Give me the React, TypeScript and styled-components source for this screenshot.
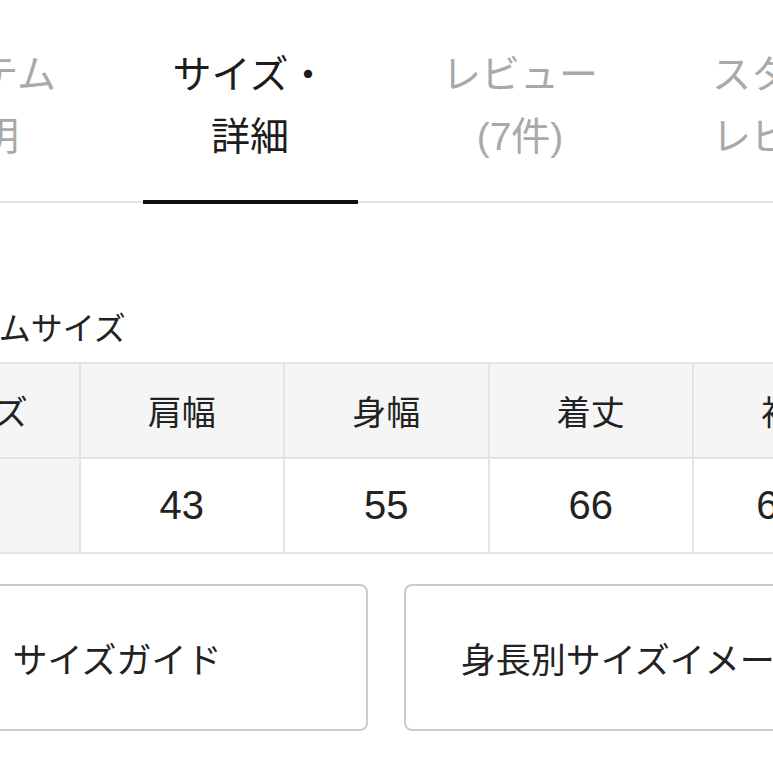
import React from "react";
import styled, { createGlobalStyle } from "styled-components";

const GlobalStyle = createGlobalStyle`
  html, body {
    margin: 0;
    padding: 0;
    background: #fff;
    overflow: hidden;
  }
  body {
    font-family: "Liberation Sans", "Noto Sans CJK JP", sans-serif;
    color: #222;
  }
`;

const Page = styled.div`
  width: 1080px;
  margin-left: -155px;
`;

const Tabs = styled.nav`
  display: flex;
  border-bottom: 2px solid #e4e4e4;
`;

const Tab = styled.div<{ $active?: boolean }>`
  width: 270px;
  flex: none;
  display: flex;
  flex-direction: column;
  align-items: center;
  padding-top: 44px;
  color: ${(p) => (p.$active ? "#1c1c1c" : "#a9a9a9")};
`;

const TabLabel = styled.div`
  font-size: 39px;
  line-height: 62px;
  text-align: center;
  white-space: nowrap;
  margin-bottom: 32px;
`;

const TabBar = styled.div<{ $active?: boolean }>`
  width: 215px;
  height: 4px;
  margin-bottom: -3px;
  background: ${(p) => (p.$active ? "#111" : "transparent")};
`;

const Section = styled.section`
  padding: 106px 0 0 61px;
  width: 960px;
`;

const Title = styled.h2`
  margin: 0 0 13px;
  font-size: 32px;
  font-weight: 400;
  line-height: 40px;
`;

const Table = styled.div`
  display: grid;
  grid-template-columns: repeat(5, 204.5px);
  margin-left: -32px;
  border-top: 2px solid #e4e4e4;
  border-bottom: 2px solid #e4e4e4;
  width: 1022px;
`;

const Cell = styled.div<{ $head?: boolean; $bottom?: boolean }>`
  height: 93px;
  display: flex;
  align-items: center;
  justify-content: center;
  background: ${(p) => (p.$head ? "#f5f5f5" : "#fff")};
  border-left: 2px solid #e4e4e4;
  border-bottom: ${(p) => (p.$bottom ? "2px solid #e4e4e4" : "none")};
  font-size: ${(p) => (p.$head ? "34px" : "40px")};
  white-space: nowrap;
  color: #222;
`;

const Buttons = styled.div`
  display: grid;
  grid-template-columns: 462px 462px;
  gap: 36px;
  margin-top: 30px;
`;

const Button = styled.button<{ $offset?: number }>`
  height: 147px;
  border: 2px solid #cbcbcb;
  border-radius: 8px;
  background: #fff;
  font-family: "Liberation Sans", "Noto Sans CJK JP", sans-serif;
  font-size: 35px;
  color: #222;
  white-space: nowrap;
  padding: 0 ${(p) => p.$offset ?? 0}px 0 0;
  cursor: pointer;
`;

const tabs = [
  ["アイテム", "説明"],
  ["サイズ・", "詳細"],
  ["レビュー", "(7件)"],
  ["スタッフ", "レビュー"],
];

const heads = ["サイズ", "肩幅", "身幅", "着丈", "袖丈"];
const values = ["F", "43", "55", "66", "61.5"];

export default function App() {
  return (
    <Page>
      <GlobalStyle />
      <Tabs>
        {tabs.map((t, i) => (
          <Tab key={i} $active={i === 1}>
            <TabLabel>
              {t[0]}
              <br />
              {t[1]}
            </TabLabel>
            <TabBar $active={i === 1} />
          </Tab>
        ))}
      </Tabs>
      <Section>
        <Title>アイテムサイズ</Title>
        <Table>
          {heads.map((h) => (
            <Cell key={h} $head $bottom>
              {h}
            </Cell>
          ))}
          {values.map((v, i) => (
            <Cell key={i} $head={i === 0}>
              {i === 0 ? "" : v}
            </Cell>
          ))}
        </Table>
        <Buttons>
          <Button $offset={40}>サイズガイド</Button>
          <Button>身長別サイズイメージ</Button>
        </Buttons>
      </Section>
    </Page>
  );
}
